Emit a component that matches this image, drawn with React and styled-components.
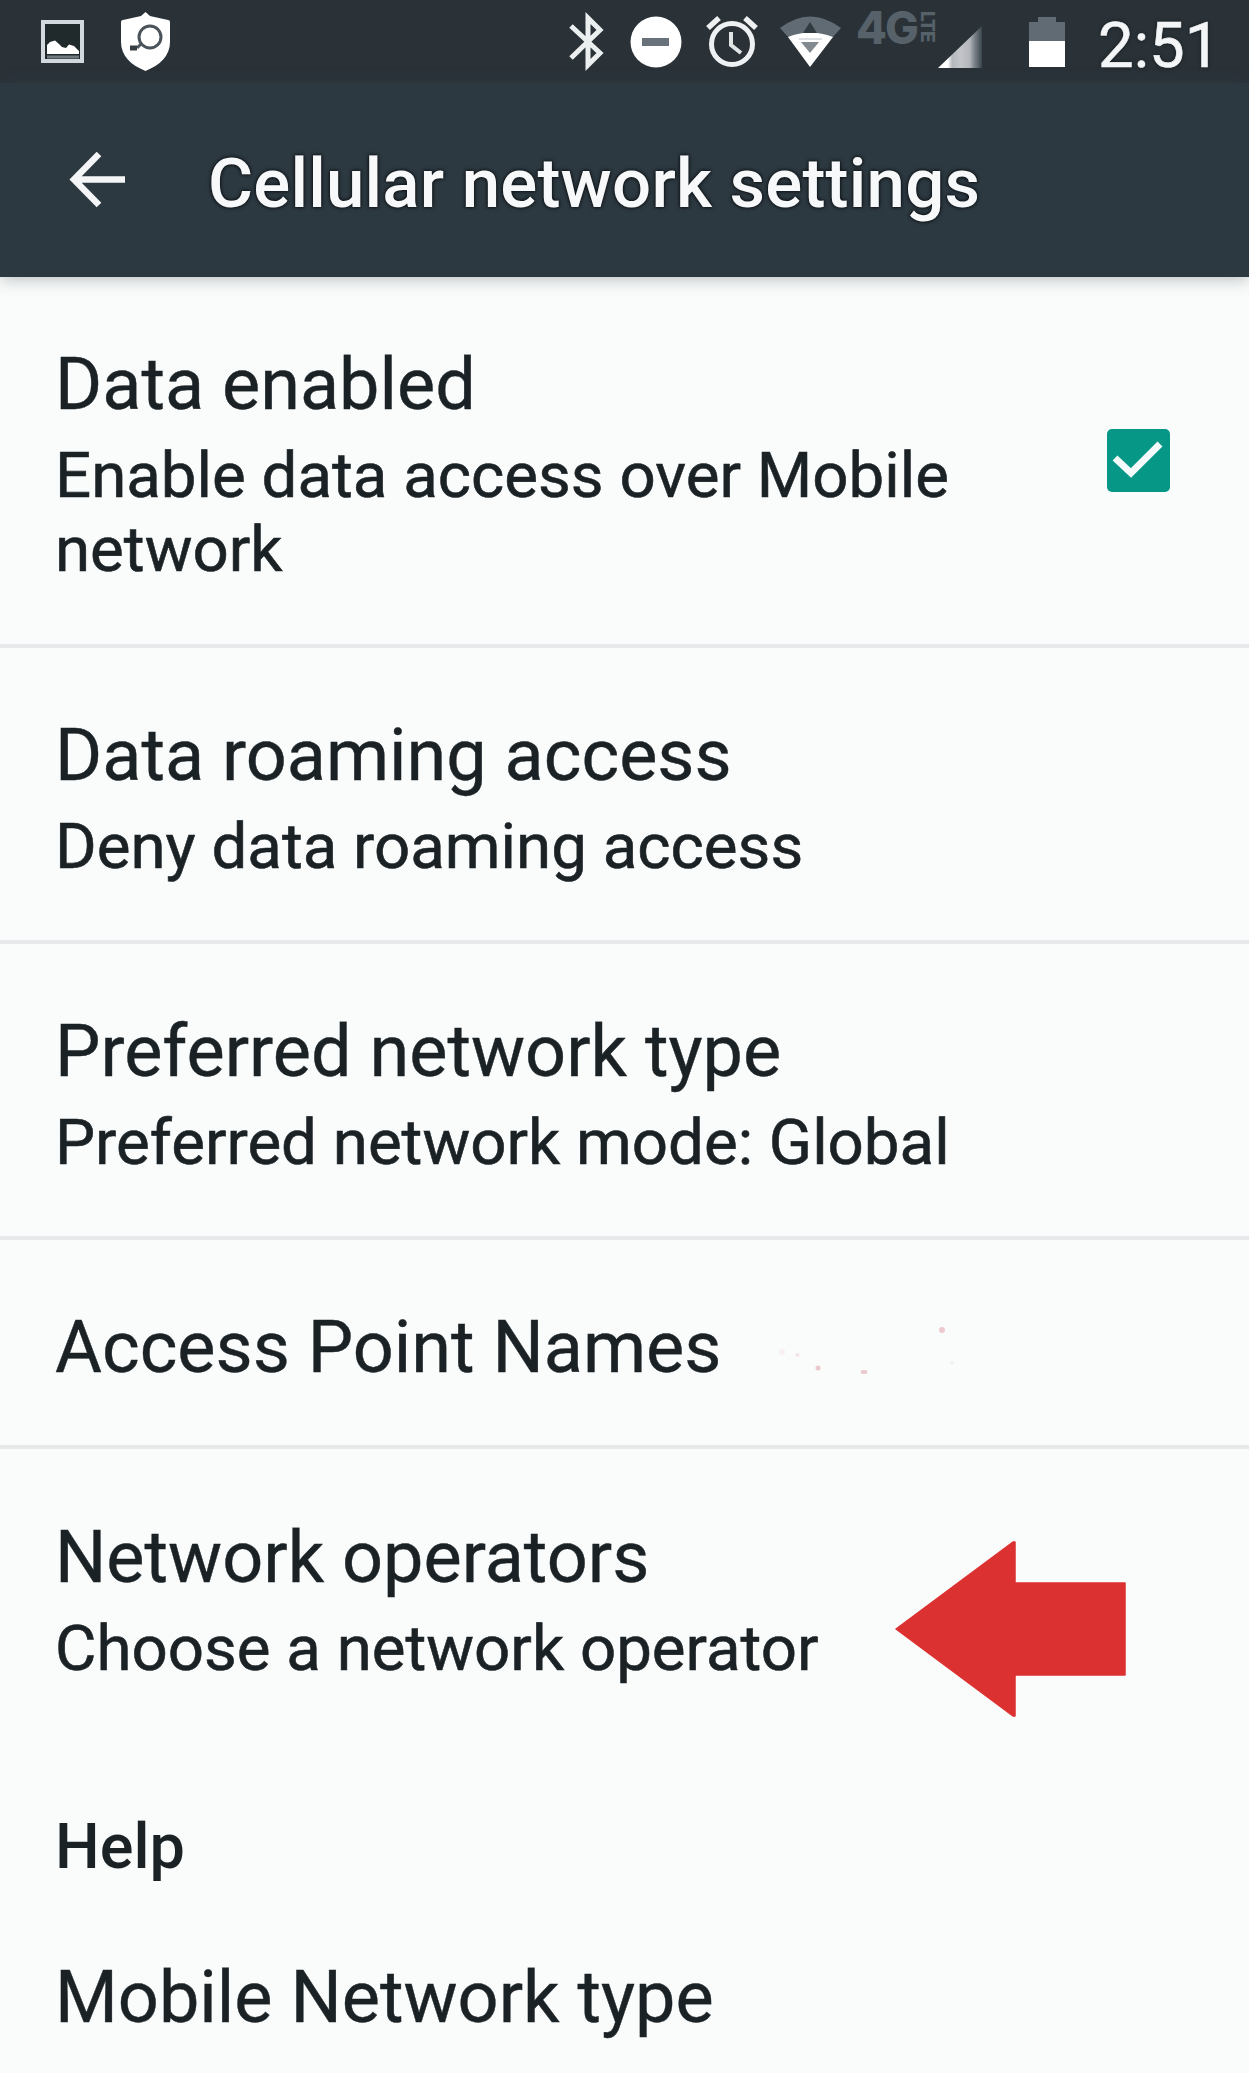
import styled, { createGlobalStyle } from 'styled-components';

const GlobalStyle = createGlobalStyle`
	body {
		margin: 0;
		background: #fafcfb;
	}
	* {
		box-sizing: border-box;
	}
`;

const rows = [
	{
		title: 'Data enabled',
		summary: 'Enable data access over Mobile network',
		height: 371,
		checked: true,
	},
	{
		title: 'Data roaming access',
		summary: 'Deny data roaming access',
		height: 296,
	},
	{
		title: 'Preferred network type',
		summary: 'Preferred network mode: Global',
		height: 296,
	},
	{ title: 'Access Point Names', height: 209, specks: true },
	{
		title: 'Network operators',
		summary: 'Choose a network operator',
		height: 299,
		pointer: true,
	},
];

export default function App() {
	return (
		<Screen>
			<GlobalStyle />
			<StatusBar>
				<NotificationIcons />
				<SystemIcons />
				<Network>
					<span>4G</span>
					<NetworkSuffix>LTE</NetworkSuffix>
				</Network>
				<SignalIcons />
				<Clock>2:51</Clock>
			</StatusBar>
			<AppBar>
				<BackIcon />
				<Heading>Cellular network settings</Heading>
			</AppBar>
			<main>
				{rows.map((row, i) => (
					<Row key={row.title} $height={row.height} $last={i === rows.length - 1}>
						<Texts>
							<Title>{row.title}</Title>
							{row.summary && <Summary>{row.summary}</Summary>}
						</Texts>
						{row.checked && <Checkbox />}
						{row.specks && <Specks />}
						{row.pointer && <Pointer />}
					</Row>
				))}
				<Category>Help</Category>
				<Title>
					<Inset>Mobile Network type</Inset>
				</Title>
			</main>
		</Screen>
	);
}

function NotificationIcons() {
	return (
		<svg width="180" height="83" viewBox="0 0 180 83">
			<rect x="43" y="22" width="39" height="39" fill="#202a2d" stroke="#d3d7de" strokeWidth="4" />
			<path
				d="M47 54V45L50 42L55 40.500L59 44L62 47L66 48L69 44.500L74 46L79 51V54Z"
				fill="#fff"
			/>
			<path d="M47 57H79" stroke="#717980" strokeWidth="3" />
			<path
				d="M145.500 12L150 16L168 20Q170 20 170 22V42C170 56 160 65 145.500 71C131 65 121 56 121 42V22Q121 20 123 20L141 16Z"
				fill="#fff"
			/>
			<circle cx="150" cy="37" r="11" fill="none" stroke="#4b545a" strokeWidth="3" />
			<path d="M141 44L137 48" stroke="#4b545a" strokeWidth="3" />
			<path d="M137 48H130" stroke="#353f45" strokeWidth="5" />
		</svg>
	);
}

function SystemIcons() {
	return (
		<svg width="676" height="83" viewBox="180 0 676 83">
			<path
				d="M571 26L600 53L588 65V18L600 30L571 58"
				fill="none"
				stroke="#eceff0"
				strokeWidth="5"
			/>
			<circle cx="656" cy="42" r="25.500" fill="#fff" />
			<rect x="642" y="38" width="27" height="8" fill="#69727a" />
			<circle cx="732" cy="44" r="20.500" fill="none" stroke="#eef0f1" strokeWidth="5" />
			<path d="M731 32V45L741 53" fill="none" stroke="#e1e5e6" strokeWidth="4" />
			<path d="M708 28L719 18M756 28L745 18" stroke="#eef0f1" strokeWidth="5.500" />
			<path d="M780 28Q810 5 841 28L832 38H789Z" fill="#606b74" />
			<path d="M788 37Q810 28 833 37L810 67Z" fill="#fff" />
			<path d="M810 22L817 33H803Z" fill="#2f3a41" />
			<path d="M801 42H819L810 53Z" fill="#828a90" />
			<path d="M799 39H822" stroke="#dce0e2" strokeWidth="2" />
		</svg>
	);
}

function SignalIcons() {
	return (
		<svg width="163" height="83" viewBox="935 0 163 83">
			<defs>
				<linearGradient id="signal" x1="0" x2="1">
					<stop offset="0" stopColor="#fff" />
					<stop offset="0.220" stopColor="#fff" />
					<stop offset="0.320" stopColor="#b4b8bc" />
					<stop offset="0.500" stopColor="#c3c5c9" />
					<stop offset="0.720" stopColor="#b3b6bb" />
					<stop offset="0.820" stopColor="#7f878d" />
					<stop offset="1" stopColor="#38444b" />
				</linearGradient>
			</defs>
			<path d="M938 68L982 26V68Z" fill="url(#signal)" />
			<path d="M1029 41V22H1038V17H1056V22H1065V41Z" fill="#606b73" />
			<rect x="1029" y="41" width="36" height="26" fill="#fff" />
		</svg>
	);
}

function BackIcon() {
	return (
		<Back viewBox="0 0 56 56">
			<path d="M30 2L5 27.500L30 53M5 27.500H56" fill="none" stroke="#f3f5f6" strokeWidth="6.500" />
		</Back>
	);
}

function Checkbox() {
	return (
		<Check viewBox="0 0 63 63">
			<rect width="63" height="63" rx="5" fill="#069786" />
			<path d="M8 29L24 44L53 15" fill="none" stroke="#f5fbfa" strokeWidth="7" />
		</Check>
	);
}

// faint leftover dots beside the row title
function Specks() {
	return (
		<SpeckArt viewBox="0 0 260 80">
			<g fill="#ecc9ce">
				<circle cx="37.500" cy="38" r="2" opacity="0.500" />
				<circle cx="58" cy="51" r="2.500" />
				<ellipse cx="104" cy="55" rx="3.500" ry="2" />
				<circle cx="182" cy="13" r="3" />
				<circle cx="22" cy="35" r="3" opacity="0.200" />
				<circle cx="192" cy="46" r="2" opacity="0.200" />
			</g>
		</SpeckArt>
	);
}

function Pointer() {
	return (
		<PointerArt viewBox="0 0 232 176">
			<path
				d="M1 88L118 1H120V42H230V134H120V175H118Z"
				fill="#dc3131"
				stroke="#dc3131"
				strokeLinejoin="round"
				strokeWidth="1.500"
			/>
		</PointerArt>
	);
}

const Screen = styled.div`
	width: 1249px;
	height: 2073px;
	overflow: hidden;
	background: #fafcfb;
	color: #1b2226;
	font-family: Roboto, sans-serif;
`;

const StatusBar = styled.header`
	display: flex;
	height: 83px;
	background: #2a3238;

	svg {
		flex: none;
		display: block;
	}
`;

const Network = styled.div`
	display: flex;
	width: 79px;
	padding-top: 3px;
	color: #56616a;
	font: 800 45px/50px Inter, sans-serif;
	letter-spacing: -2px;
`;

const NetworkSuffix = styled.span`
	height: 36px;
	margin: 8px 0 0 1px;
	font-size: 19px;
	line-height: 18px;
	letter-spacing: -1px;
	writing-mode: vertical-rl;
`;

const Clock = styled.div`
	color: #f3f5f6;
	font-size: 63.5px;
	line-height: 92px;
	text-shadow: 0 0 4px #11181b;
	-webkit-text-stroke: 0.6px #f3f5f6;
	white-space: nowrap;
`;

const AppBar = styled.div`
	display: flex;
	align-items: center;
	height: 194px;
	padding-left: 69px;
	background: #2d3941;
	box-shadow: 0 2px 16px rgba(60, 70, 80, 0.35);
`;

const Back = styled.svg`
	flex: none;
	width: 56px;
	height: 56px;
`;

const Heading = styled.h1`
	margin: 8px 0 0 83px;
	color: #f7f8f9;
	font-size: 69px;
	font-weight: 500;
	letter-spacing: 0.2px;
	line-height: 80px;
	text-shadow: 0 0 4px #0c1114, 0 0 3px #0c1114;
	white-space: nowrap;
`;

const Row = styled.section`
	display: flex;
	height: ${(p) => p.$height}px;
	padding: ${(p) => (p.$last ? 67 : 66)}px 79px 0 55px;
	border-bottom: ${(p) => (p.$last ? 0 : 4)}px solid #e6e8ea;
`;

const Texts = styled.div`
	flex: none;
	max-width: 930px;
`;

const Title = styled.div`
	font-size: 72px;
	line-height: 84px;
	-webkit-text-stroke: 0.4px #1b2226;
	white-space: nowrap;
`;

const Summary = styled.div`
	margin-top: 12px;
	font-size: 63.6px;
	line-height: 74px;
	-webkit-text-stroke: 0.6px #1b2226;
`;

const Check = styled.svg`
	width: 63px;
	height: 63px;
	margin: 86px 0 0 auto;
`;

const SpeckArt = styled.svg`
	width: 260px;
	height: 80px;
	margin: 11px 0 0 39px;
`;

const PointerArt = styled.svg`
	flex: none;
	width: 232px;
	height: 176px;
	margin: 25px 43px 0 auto;
`;

const Category = styled.h2`
	margin: 62px 0 72px 55px;
	font-size: 63px;
	font-weight: 500;
	line-height: 74px;
`;

const Inset = styled.span`
	margin-left: 55px;
`;
